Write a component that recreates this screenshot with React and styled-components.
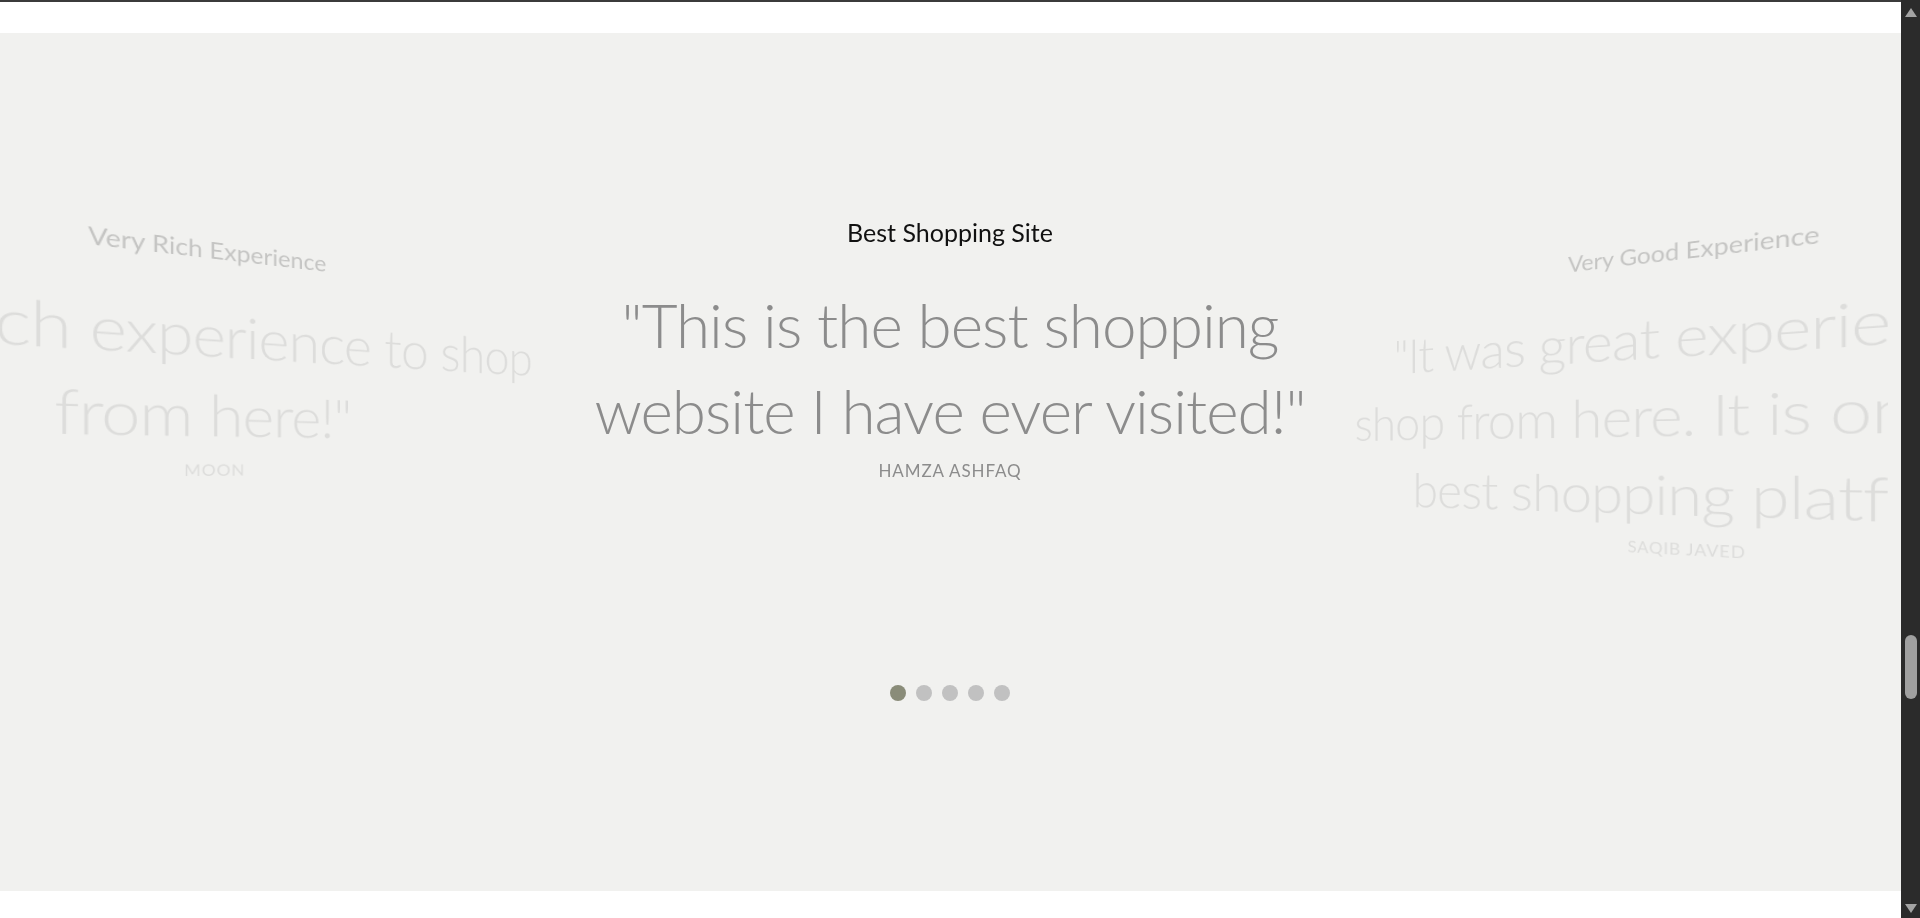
import React from "react";
import styled, { createGlobalStyle } from "styled-components";

const GlobalStyle = createGlobalStyle`
  html, body {
    margin: 0;
    background: #ffffff;
    overflow: hidden;
  }
  body {
    color: #111111;
    font-family: "Lato", "Noto Sans", sans-serif;
  }
`;

// in the order of the pagination dots
const reviews = [
  {
    title: "Best Shopping Site",
    lines: ['"This is the best shopping', 'website I have ever visited!"'],
    name: "Hamza Ashfaq",
  },
  {
    title: "Very Good Experience",
    lines: ['"It was great experience to', "shop from here. It is one of the", 'best shopping platform!"'],
    name: "Saqib Javed",
  },
  {
    title: "Quick Delivery",
    lines: ['"My order arrived', 'earlier than expected!"'],
    name: "Ali Raza",
  },
  {
    title: "Great Quality",
    lines: ['"The products are of', 'really great quality!"'],
    name: "Usman Khan",
  },
  {
    title: "Very Rich Experience",
    lines: ['"Very rich experience to shop', 'from here!"'],
    name: "Moon",
  },
];

const Page = styled.div`
  display: flex;
  height: 918px;
`;

const Main = styled.main`
  flex: 1;
  min-width: 0;
`;

const PrevEdge = styled.div`
  height: 2px;
  background: #3b3b3b;
`;

const Section = styled.section`
  margin-top: 31px;
  height: 858px;
  background: #f1f1ef;
`;

const Carousel = styled.div`
  width: 1888px;
  height: 100%;
  padding-left: 12px;
  box-sizing: border-box;
  display: flex;
  flex-direction: column;
  overflow: hidden;
  perspective: 1200px;
  perspective-origin: 950px 429px;
`;

const Track = styled.div`
  margin-top: 184px;
  display: flex;
  justify-content: center;
  align-items: flex-start;
  transform-style: preserve-3d;
`;

const Slide = styled.div`
  flex: 0 0 796px;
  display: flex;
  flex-direction: column;
  align-items: center;
  text-align: center;
  transform: translateZ(${(p) => -100 * Math.abs(p.$offset)}px) rotateY(${(p) => -50 * p.$offset}deg);
  opacity: ${(p) => (p.$offset === 0 ? 1 : Math.abs(p.$offset) === 1 ? 0.2 : 0)};
`;

const Title = styled.h3`
  margin: 0;
  font-family: "Lato", sans-serif;
  font-weight: 400;
  font-size: 25px;
  line-height: 30px;
  color: #111111;
`;

const Quote = styled.p`
  margin: 34px 0 0;
  font-family: "Lato", sans-serif;
  font-weight: 300;
  font-size: 62px;
  line-height: 86px;
  letter-spacing: -1px;
  color: #8c8c8c;
  white-space: nowrap;
`;

const Line = styled.span`
  display: block;
`;

const Name = styled.div`
  margin-top: 8px;
  font-family: "Lato", sans-serif;
  font-size: 17px;
  line-height: 20px;
  letter-spacing: 0.9px;
  text-transform: uppercase;
  color: #8c8c8c;
`;

const Dots = styled.div`
  margin-top: 118px;
  display: flex;
  justify-content: center;
  gap: 10px;
`;

const Dot = styled.button`
  width: 16px;
  height: 16px;
  padding: 0;
  border: none;
  border-radius: 50%;
  background: ${(p) => (p.$active ? "#8a8c79" : "#c1c1c1")};
`;

const Rail = styled.div`
  width: 19px;
  flex: 0 0 19px;
  background: #2b2b2b;
  display: flex;
  flex-direction: column;
  align-items: center;
  padding: 8px 0 5px;
  box-sizing: border-box;
`;

const Arrow = styled.span`
  width: 0;
  height: 0;
  border-left: 6px solid transparent;
  border-right: 6px solid transparent;
  ${(p) => (p.$down ? "border-top: 9px solid #a3a3a3; margin-top: auto;" : "border-bottom: 9px solid #a3a3a3;")}
`;

const Thumb = styled.span`
  margin-top: 618px;
  width: 12px;
  height: 64px;
  border-radius: 6px;
  background: #a0a0a0;
`;

const positions = [-2, -1, 0, 1, 2];

export default function App() {
  const active = 0;
  return (
    <>
      <GlobalStyle />
      <Page>
        <Main>
          <PrevEdge />
          <Section>
            <Carousel>
              <Track>
                {positions.map((offset) => {
                  const r = reviews[(active + offset + reviews.length) % reviews.length];
                  return (
                    <Slide key={offset} $offset={offset}>
                      <Title>{r.title}</Title>
                      <Quote>
                        {r.lines.map((l) => (
                          <Line key={l}>{l}</Line>
                        ))}
                      </Quote>
                      <Name>{r.name}</Name>
                    </Slide>
                  );
                })}
              </Track>
              <Dots>
                {reviews.map((r, i) => (
                  <Dot key={i} $active={i === active} aria-label={`Go to slide ${i + 1}`} />
                ))}
              </Dots>
            </Carousel>
          </Section>
        </Main>
        <Rail>
          <Arrow />
          <Thumb />
          <Arrow $down />
        </Rail>
      </Page>
    </>
  );
}
